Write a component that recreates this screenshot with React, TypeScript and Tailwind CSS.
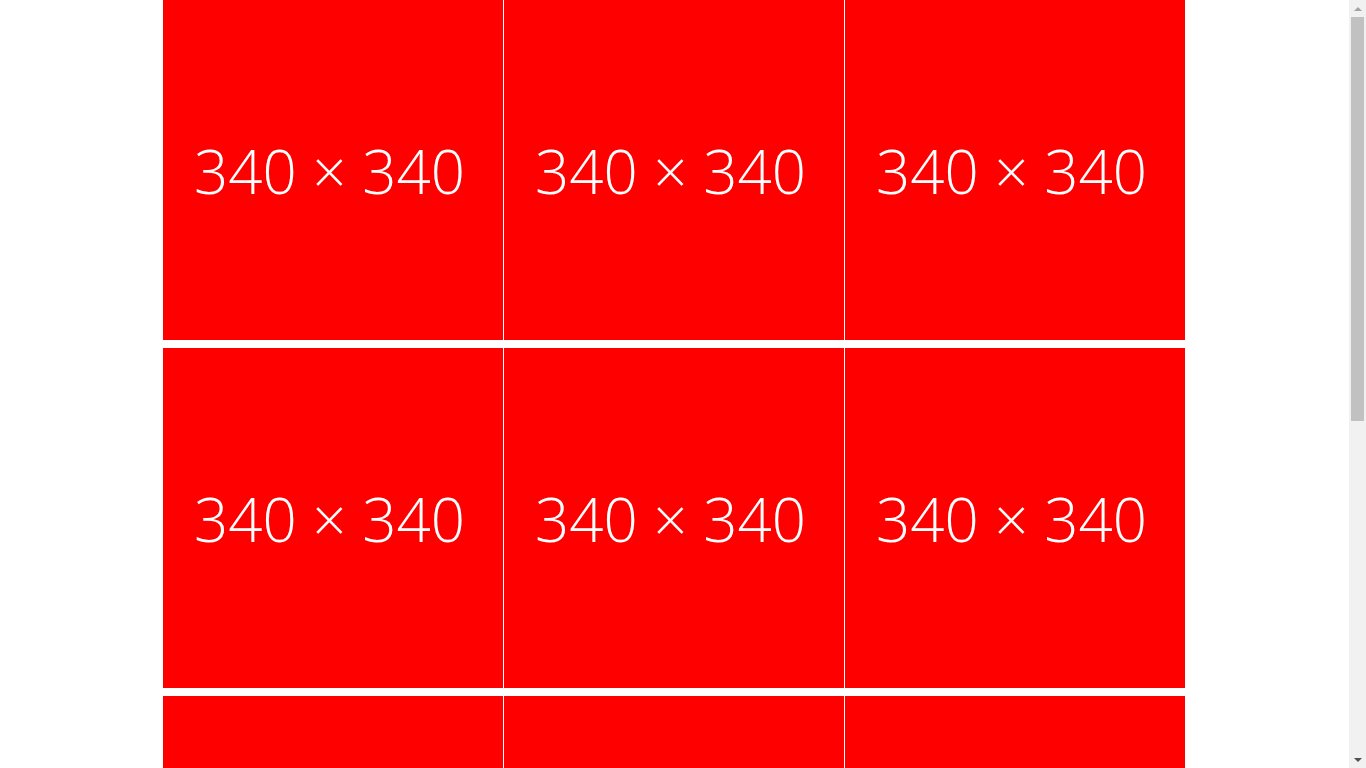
import React from "react";

function Arrow({ up }: { up: boolean }) {
  return (
    <div className="flex h-[17px] w-[17px] items-center justify-center">
      <div
        className={
          up
            ? "h-0 w-0 border-x-[4px] border-b-[4px] border-x-transparent border-b-[#a3a3a3]"
            : "h-0 w-0 border-x-[4px] border-t-[4px] border-x-transparent border-t-[#505050]"
        }
      />
    </div>
  );
}

export default function App() {
  const items = Array.from({ length: 12 }, (_, i) => i);
  return (
    <div className="flex h-screen overflow-hidden bg-white">
      <main className="min-w-0 flex-1 pl-[163px]">
        <div className="grid grid-cols-[repeat(3,340px)] gap-x-px gap-y-2">
          {items.map((i) => (
            <div
              key={i}
              className="flex h-[340px] w-[340px] items-center justify-center bg-[#ff0000] pr-[7px] pt-[1px] text-white"
            >
              <span
                className="whitespace-nowrap text-[60px] font-light leading-none"
                style={{ fontFamily: '"Open Sans", "Noto Sans", sans-serif' }}
              >
                340 × 340
              </span>
            </div>
          ))}
        </div>
      </main>
      <aside className="flex w-[17px] shrink-0 flex-col bg-[#f1f1f1]">
        <Arrow up />
        <div className="flex-1">
          <div className="mx-[2px] h-[404px] bg-[#c1c1c1]" />
        </div>
        <Arrow up={false} />
      </aside>
    </div>
  );
}
